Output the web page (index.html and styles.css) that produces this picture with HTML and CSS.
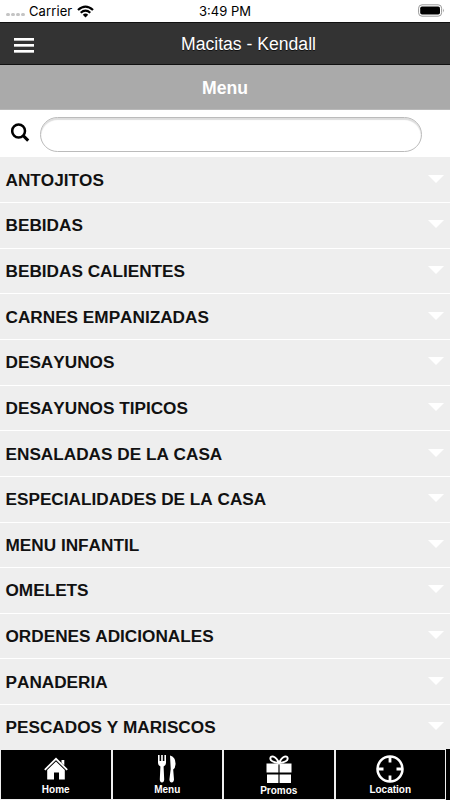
FILE: index.html
```
<!DOCTYPE html>
<html lang="en">

<head>
    <meta charset="UTF-8">
    <meta name="viewport" content="width=device-width, initial-scale=1.0">
    <title>Macitas - Kendall</title>
    <link rel="stylesheet" href="styles.css">
</head>

<body>

    <!-- Status bar -->
    <div class="status-bar">
        <div class="carrier">
            <span class="signal"><i></i><i></i><i></i><i></i></span>
            <span class="carrier-name">Carrier</span>
            <svg class="wifi" width="17" height="13" viewBox="0 0 17 13">
                <path d="M1 5 Q8.5 -1.8 16 5" fill="none" stroke="#000" stroke-width="2.3"/>
                <path d="M3.7 7.8 Q8.5 3.5 13.3 7.8" fill="none" stroke="#000" stroke-width="2.1"/>
                <path d="M5.8 9.8 Q8.5 7.3 11.2 9.8 L8.5 12.5 Z"/>
            </svg>
        </div>
        <div class="clock">3:49 PM</div>
        <div class="battery">
            <svg width="27" height="13" viewBox="0 0 27 13">
                <rect x=".6" y=".8" width="23" height="11.4" rx="3.4" fill="none" stroke="#999"/>
                <rect x="2.2" y="2.4" width="19.8" height="8.2" rx="1.8"/>
                <path d="M25 4.6 Q26.8 6.5 25 8.4 Z" fill="#999"/>
            </svg>
        </div>
    </div>

    <div class="header">
        <div class="hamburger"><span></span><span></span><span></span></div>
        <div class="header-title">Macitas - Kendall</div>
    </div>

    <div class="page-title">Menu</div>

    <div class="search">
        <svg class="search-icon" width="20" height="20" viewBox="0 0 20 20" fill="none" stroke="#000">
            <circle cx="7.6" cy="8" r="6.4" stroke-width="2.5"/>
            <path d="M12.2 12.6 L17.2 17.6" stroke-width="3"/>
        </svg>
        <input type="text" class="search-input" aria-label="Search">
    </div>

    <!-- Menu categories -->
    <div class="menu-list">
        <div class="menu-item">ANTOJITOS</div>
        <div class="menu-item">BEBIDAS</div>
        <div class="menu-item">BEBIDAS CALIENTES</div>
        <div class="menu-item">CARNES EMPANIZADAS</div>
        <div class="menu-item">DESAYUNOS</div>
        <div class="menu-item">DESAYUNOS TIPICOS</div>
        <div class="menu-item">ENSALADAS DE LA CASA</div>
        <div class="menu-item">ESPECIALIDADES DE LA CASA</div>
        <div class="menu-item">MENU INFANTIL</div>
        <div class="menu-item">OMELETS</div>
        <div class="menu-item">ORDENES ADICIONALES</div>
        <div class="menu-item">PANADERIA</div>
        <div class="menu-item">PESCADOS Y MARISCOS</div>
    </div>

    <!-- Bottom tabs -->
    <div class="tab-bar">
        <div class="tab">
            <svg width="28" height="28" viewBox="0 0 28 28">
                <path d="M2.8 14.8 L14 3.8 L25.2 14.8" fill="none" stroke="#fff" stroke-width="1.8"/>
                <path d="M19.5 5 H22.3 V10.5 L19.5 7.8 Z M14 6.5 L22.8 15 V24.5 H17 V17.5 H12 V24.5 H5.2 V15 Z" fill="#fff"/>
            </svg>
            <span>Home</span>
        </div>
        <div class="tab">
            <svg width="28" height="28" viewBox="0 0 28 28" fill="#fff">
                <path d="M5 0 H6.6 V6 H8.2 V0 H9.8 V6 H11.4 V0 H13 V8 Q13 10.5 10.6 11.5 L11.2 24.5 Q11 27.5 9 27.5 Q7 27.5 6.8 24.5 L7.4 11.5 Q5 10.5 5 8 Z"/>
                <path d="M17 .5 Q23 2 22.5 9.5 Q22.3 13 20.2 14.5 L21 24.5 Q20.7 27.5 18.7 27.5 Q16.6 27.5 16.4 24.5 L17.7 14 Z"/>
            </svg>
            <span>Menu</span>
        </div>
        <div class="tab">
            <svg width="28" height="28" viewBox="0 0 28 28" fill="#fff">
                <path d="M14 8 C11 1 5 -.5 5.4 4 C5.6 7 10 7.5 14 8 C18 7.5 22.4 7 22.6 4 C23 -.5 17 1 14 8 Z" fill="none" stroke="#fff" stroke-width="2"/>
                <path d="M1.5 8.5 H13.4 V17.5 H1.5 Z M14.6 8.5 H26.5 V17.5 H14.6 Z M2 19.5 H13.4 V28 H2 Z M14.6 19.5 H26 V28 H14.6 Z"/>
            </svg>
            <span class="low">Promos</span>
        </div>
        <div class="tab">
            <svg width="28" height="28" viewBox="0 0 28 28" fill="none" stroke="#fff">
                <circle cx="14" cy="14" r="12.5" stroke-width="2.5"/>
                <path d="M14 2 V7.5 M14 20.5 V26 M2 14 H7.5 M20.5 14 H26" stroke-width="2.8"/>
            </svg>
            <span>Location</span>
        </div>
        <div class="tab-edge"></div>
    </div>

</body>

</html>
```

FILE: styles.css
```
* {
    box-sizing: border-box;
}

body {
    font-family: "Liberation Sans", Arial, sans-serif;
    background-color: #fff;
    color: #111;
    margin: 0;
    height: 800px;
    display: flex;
    flex-direction: column;
    overflow: hidden;
}

.status-bar {
    height: 22px;
    flex: none;
    display: grid;
    grid-template-columns: 1fr auto 1fr;
    align-items: center;
    padding: 0 5px 0 5px;
    font-family: Inter, sans-serif;
    font-size: 13px;
    line-height: 20px;
    color: #000;
}

.carrier {
    display: flex;
    align-items: center;
}

.signal {
    display: flex;
    gap: 1px;
    margin: 7px 4px 0 1px;
}

.signal i {
    width: 4px;
    height: 3px;
    border-radius: 2px;
    background-color: #c4c4c4;
}

.carrier-name {
    letter-spacing: 0.1px;
}

.wifi {
    margin-left: 5px;
}

.battery {
    display: flex;
    justify-content: flex-end;
    margin-top: -1px;
}

.header {
    height: 43px;
    flex: none;
    display: flex;
    align-items: center;
    background-color: #333;
    border-top: 1px solid #111;
    border-bottom: 1px solid #111;
    color: #fff;
}

.hamburger {
    width: 20px;
    margin: 4px 0 0 14px;
    display: flex;
    flex-direction: column;
    gap: 3px;
}

.hamburger span {
    height: 3px;
    background-color: #fff;
    border-bottom: 1px solid #bbb;
}

.header-title {
    flex: 1;
    margin-left: 13px;
    padding-top: 2px;
    text-align: center;
    font-size: 17.6px;
    text-shadow: 0 1px 0 #111;
}

.page-title {
    height: 45px;
    flex: none;
    line-height: 46px;
    background-color: #aaa;
    border-bottom: 1px solid #b8b8b8;
    color: #fff;
    text-align: center;
    font-size: 17.6px;
    font-weight: bold;
}

.search {
    height: 47.4px;
    flex: none;
    display: flex;
    align-items: flex-start;
    padding: 7px 28px 0 11px;
}

.search-icon {
    margin: 6px 9px 0 0;
}

.search-input {
    flex: 1;
    height: 35px;
    padding: 0 14px;
    border: 1px solid #bbb;
    border-radius: 18px;
    background-color: #fff;
    box-shadow: inset 0 2px 1px #ddd;
    font-size: 16px;
    outline: none;
}

.menu-list {
    flex: 1;
    overflow: hidden;
    background-color: #eee;
}

.menu-item {
    height: 45.65px;
    display: flex;
    align-items: center;
    justify-content: space-between;
    padding: 1px 6px 0 5.5px;
    border-bottom: 1px solid #fff;
    font-size: 17.2px;
    font-weight: bold;
    font-kerning: none;
}

.menu-item::after {
    content: "";
    margin-bottom: 3px;
    border: 8.5px solid transparent;
    border-top: 8.5px solid #fff;
    border-bottom: none;
}

.tab-bar {
    height: 51px;
    flex: none;
    display: flex;
    gap: 2px;
    padding: 1px 0 1px 1px;
    background-color: #eee;
}

.tab {
    flex: 1;
    display: flex;
    flex-direction: column;
    align-items: center;
    padding-top: 5px;
    background-color: #000;
    color: #fff;
    font-size: 10px;
    font-weight: bold;
    line-height: 13px;
}

.tab .low {
    padding-top: 1px;
}

.tab-edge {
    width: 4px;
    margin: -1px 0;
    margin-left: -1px;
    background-color: #000;
}
```
